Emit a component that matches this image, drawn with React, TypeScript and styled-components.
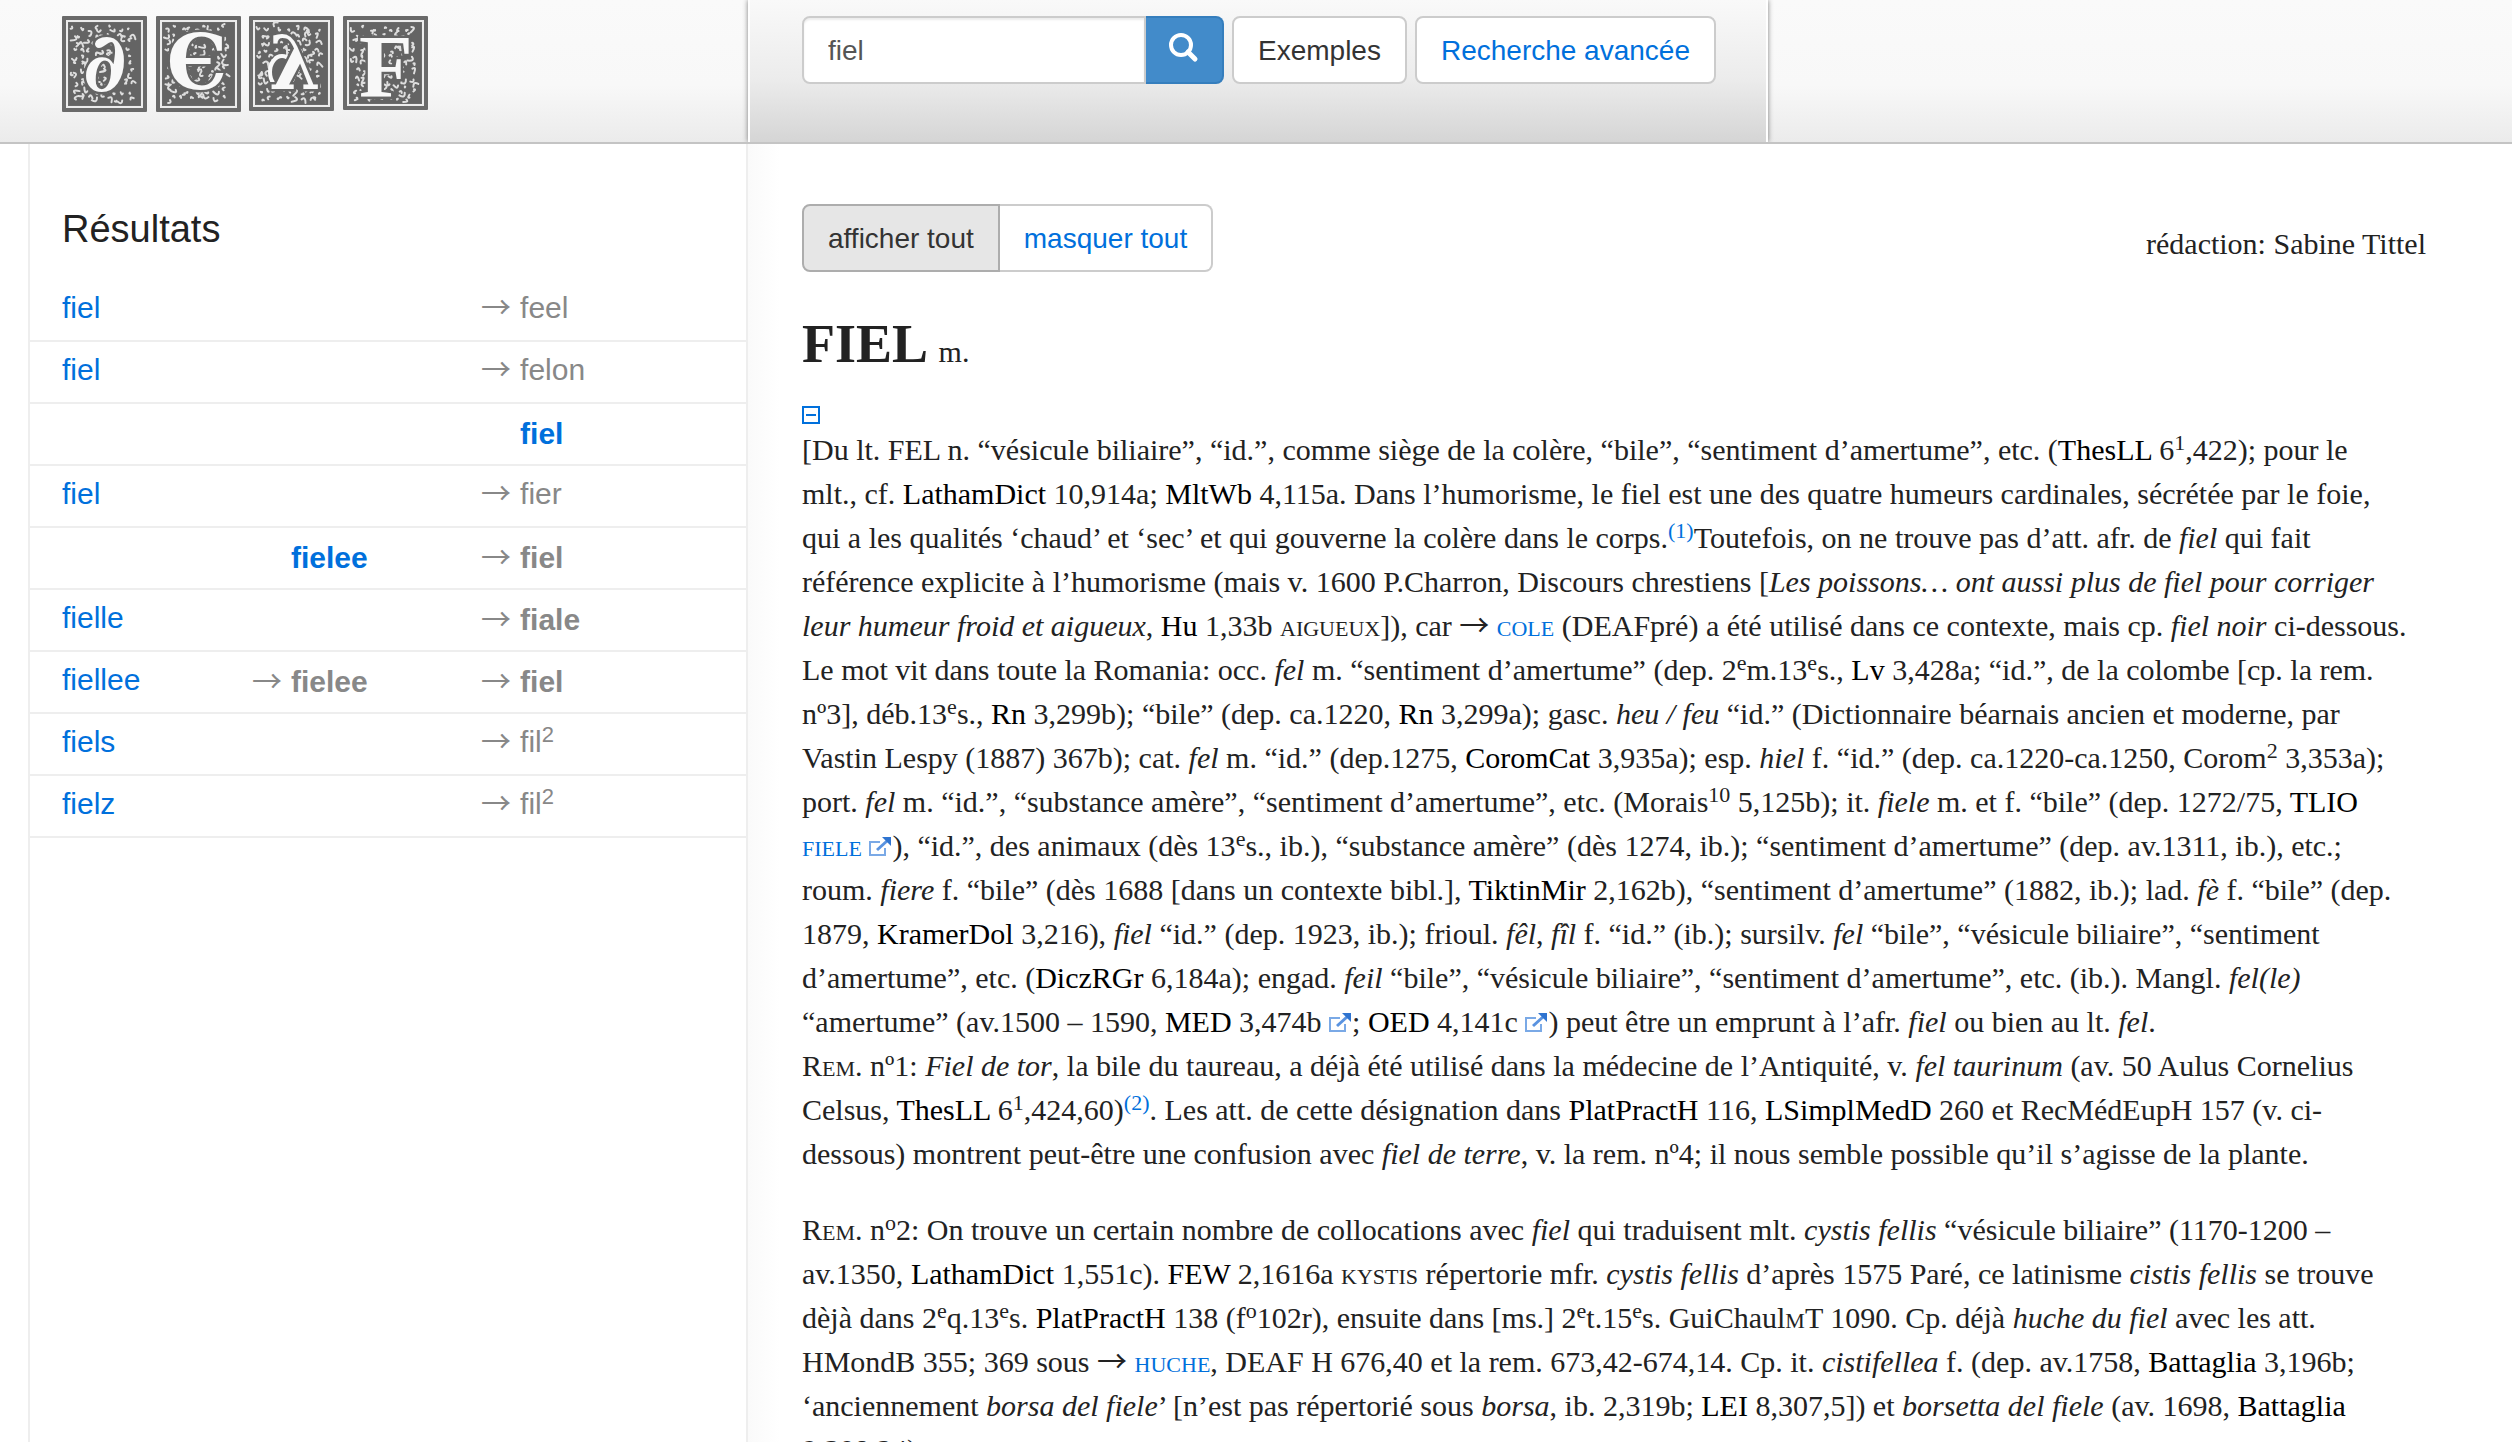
import React from "react";
import styled, { createGlobalStyle } from "styled-components";

const sans = `"Liberation Sans", Arial, sans-serif`;
const serif = `"Liberation Serif", "Times New Roman", serif`;
const arrowFont = `"Noto Sans CJK JP", sans-serif`;
const blue = "#0070dc";

const Global = createGlobalStyle`
  * { box-sizing: border-box; }
  html, body, #root { height: 100%; }
  body { margin: 0; background: #fff; color: #222; font-family: ${sans}; overflow: hidden; }
  a { color: ${blue}; text-decoration: none; }
`;

const Page = styled.div`
  display: flex;
  flex-direction: column;
  height: 100%;
`;

const Header = styled.header`
  display: grid;
  grid-template-columns: 748px auto 1fr;
  flex: none;
  height: 144px;
  border-bottom: 2px solid #c4c4c4;
  background: linear-gradient(#fafafa, #f8f8f8 60%, #ebebeb);
`;

const Brand = styled.a`
  display: block;
  padding: 15px 0 0 60px;
  line-height: 0;
`;

const SearchPanel = styled.form`
  display: flex;
  align-items: flex-start;
  gap: 8px;
  padding: 16px 50px 16px 52px;
  border: solid #fff;
  border-width: 0 2px;
  background: linear-gradient(#f9f9f9, #ececec 55%, #d5d5d5);
  box-shadow: 0 0 5px rgba(0, 0, 0, 0.5);
  clip-path: inset(0 -6px 0 -6px);
`;

const Field = styled.div`
  display: flex;
`;

const SearchInput = styled.input`
  width: 344px;
  height: 68px;
  padding: 2px 24px 0;
  border: 2px solid #ccc;
  border-radius: 8px 0 0 8px;
  background: #fff;
  box-shadow: inset 0 2px 2px rgba(0, 0, 0, 0.075);
  color: #555;
  font: 28px ${sans};
  outline: none;
`;

const SearchButton = styled.button`
  display: flex;
  align-items: center;
  justify-content: center;
  width: 78px;
  height: 68px;
  padding: 0 0 4px;
  border: 2px solid #357ebd;
  border-left: 0;
  border-radius: 0 8px 8px 0;
  background: #428bca;
`;

const Button = styled.button<{ $link?: boolean; $active?: boolean }>`
  height: 68px;
  padding: 2px 24px 0;
  border: 2px solid ${(p) => (p.$active ? "#adadad" : "#ccc")};
  border-radius: 8px;
  background: ${(p) => (p.$active ? "#e6e6e6" : "#fff")};
  color: ${(p) => (p.$link ? blue : "#333")};
  font: 28px ${sans};
  white-space: nowrap;
`;

const ButtonGroup = styled.div`
  display: flex;
  ${Button}:first-child { border-radius: 8px 0 0 8px; }
  ${Button}:last-child { border-radius: 0 8px 8px 0; border-left: 0; }
`;

const Main = styled.div`
  display: grid;
  grid-template-columns: 720px 1fr;
  flex: 1;
  min-height: 0;
  padding-left: 28px;
`;

const Sidebar = styled.aside`
  padding-top: 63px;
  border: solid #eee;
  border-width: 0 2px;
`;

const SidebarTitle = styled.h2`
  margin: 0;
  padding-left: 32px;
  color: #222;
  font: 38px/44px ${sans};
`;

const Results = styled.table`
  width: 100%;
  margin-top: 28px;
  border-collapse: collapse;
  table-layout: fixed;
  font: 30px/34px ${sans};
`;

const Col = styled.col<{ $share: number }>`
  width: ${(p) => p.$share}%;
`;

const Row = styled.tr`
  height: 62px;
  border-bottom: 2px solid #eee;
`;

const Cell = styled.td<{ $first?: boolean }>`
  padding: ${(p) => (p.$first ? "0 0 4px 32px" : "0 0 4px")};
  color: #888;
  vertical-align: middle;
  white-space: nowrap;
  sup { font-size: 22px; line-height: 0; vertical-align: 10px; }
`;

const Target = styled.span<{ $bold?: boolean }>`
  display: flex;
  align-items: baseline;
  padding-top: ${(p) => (p.$bold ? "4px" : "0")};
  font-weight: ${(p) => (p.$bold ? 700 : 400)};
`;

const ArrowSlot = styled.span`
  flex: none;
  width: 39px;
  font: 400 30px/28px ${arrowFont};
`;

const Article = styled.main`
  padding: 60px 86px 0 54px;
  background: linear-gradient(to right, #fafafa, #fff 32px);
  font-family: ${serif};
  overflow: hidden;
`;

const Toolbar = styled.div`
  display: flex;
  align-items: center;
  justify-content: space-between;
`;

const Credit = styled.span`
  padding-top: 12px;
  font-size: 30px;
  line-height: 44px;
`;

const Headword = styled.h1`
  margin: 40px 0 0;
  font-size: 54px;
  line-height: 64px;
  small { font-size: 30px; font-weight: 400; }
`;

const Toggle = styled.button`
  display: block;
  margin: 22px 0 4px;
  padding: 0;
  border: 0;
  background: none;
  line-height: 0;
`;

const Para = styled.p`
  margin: 0 0 32px;
  font-size: 30px;
  line-height: 44px;
  white-space: nowrap;
  sup { font-size: 22px; line-height: 0; vertical-align: 10px; }
`;

const Src = styled.a`
  && { color: #000; }
`;

const Caps = styled.span`
  font-size: 22px;
  line-height: 0;
`;

const CapsLink = styled.a`
  font-size: 22px;
  line-height: 0;
`;

const Arr = styled.span`
  font-family: ${arrowFont};
  font-size: 30px;
  line-height: 0;
`;

const ExtLink = styled.a`
  display: inline-block;
  width: 23px;
  height: 19px;
  line-height: 0;
`;

const Ext = () => (
  <ExtLink href="#" aria-label="lien externe">
    <svg width="23" height="19" viewBox="0 0 23 19" fill="none">
      <path d="M11 5H1v13h15v-7" stroke="#7aa9e6" strokeWidth="2" />
      <path d="M8 13 18 4" stroke="#5a93e0" strokeWidth="3" />
      <path d="M13 0h9v9z" fill="#2f74d0" />
    </svg>
  </ExtLink>
);

/* Woodcut initials: a framed tile filled with small foliage strokes. */
function foliage(seed: number) {
  let s = seed;
  const rnd = () => (s = (s * 16807) % 2147483647) / 2147483647;
  const out: string[] = [];
  for (let y = 10; y < 84; y += 7) {
    for (let x = 10; x < 73; x += 7) {
      const px = x + rnd() * 5;
      const py = y + rnd() * 5;
      const a = rnd() * 6.28;
      const r = 1 + rnd() * 5;
      const b = a + 1 + rnd();
      out.push(
        `M${px.toFixed(1)} ${py.toFixed(1)}q${(Math.cos(a) * r).toFixed(1)} ${(Math.sin(a) * r).toFixed(1)} ${(Math.cos(b) * r).toFixed(1)} ${(Math.sin(b) * r).toFixed(1)}`
      );
    }
  }
  return out.join("");
}

type TileProps = { x: number; h: number; seed: number; children: React.ReactNode };
const Tile = ({ x, h, seed, children }: TileProps) => (
  <g transform={`translate(${x} 1)`}>
    <rect width="85" height={h} rx="1" fill="#6a6a6a" />
    <rect x="5" y="5" width="75" height={h - 10} fill="none" stroke="#ececec" strokeWidth="2" />
    <rect x="7" y="7" width="71" height={h - 14} fill="#646464" />
    <path d={foliage(seed)} fill="none" stroke="#dedede" strokeWidth="2" strokeLinecap="round" />
    {children}
  </g>
);

const Glyph = styled.text<{ $serif?: boolean }>`
  fill: #f8f8f8;
  stroke: #646464;
  stroke-width: 5px;
  paint-order: stroke;
  font-family: ${(p) => (p.$serif ? `"Liberation Serif", serif` : `"DejaVu Serif", serif`)};
  font-weight: 700;
  text-anchor: middle;
`;

const Logo = () => (
  <svg width="370" height="100" viewBox="0 0 370 100" role="img" aria-label="DEAF">
    <Tile x={2} h={96} seed={77}>
      <Glyph x="43" y="75" fontSize="82">∂</Glyph>
    </Tile>
    <Tile x={96} h={96} seed={4231}>
      <Glyph x="41" y="73" fontSize="76">Є</Glyph>
    </Tile>
    <Tile x={189} h={95} seed={9917}>
      <ellipse cx="33" cy="56" rx="12" ry="16" fill="#646464" stroke="#f8f8f8" strokeWidth="4" />
      <Glyph x="46" y="73" fontSize="74">λ</Glyph>
    </Tile>
    <Tile x={283} h={94} seed={31337}>
      <Glyph $serif x="43" y="80" fontSize="88">F</Glyph>
    </Tile>
  </svg>
);

const SearchIcon = () => (
  <svg width="30" height="30" viewBox="0 0 30 30" fill="none" stroke="#fff">
    <circle cx="12" cy="12" r="10" strokeWidth="4" />
    <path d="M19 19l7 7" strokeWidth="5" strokeLinecap="round" />
  </svg>
);

type Ref = { word: React.ReactNode; arrow?: boolean; bold?: boolean; link?: boolean };
type Result = { form?: string; mid?: Ref; end: Ref };

const fil2 = <>fil<sup>2</sup></>;
const results: Result[] = [
  { form: "fiel", end: { word: "feel", arrow: true } },
  { form: "fiel", end: { word: "felon", arrow: true } },
  { end: { word: "fiel", bold: true, link: true } },
  { form: "fiel", end: { word: "fier", arrow: true } },
  { mid: { word: "fielee", bold: true, link: true }, end: { word: "fiel", arrow: true, bold: true } },
  { form: "fielle", end: { word: "fiale", arrow: true, bold: true } },
  { form: "fiellee", mid: { word: "fielee", arrow: true, bold: true }, end: { word: "fiel", arrow: true, bold: true } },
  { form: "fiels", end: { word: fil2, arrow: true } },
  { form: "fielz", end: { word: fil2, arrow: true } },
];

const RefCell = ({ item }: { item?: Ref }) => (
  <Cell>
    {item && (
      <Target $bold={item.bold}>
        <ArrowSlot>{item.arrow ? "→" : "\u00a0"}</ArrowSlot>
        {item.link ? <a href="#">{item.word}</a> : <span>{item.word}</span>}
      </Target>
    )}
  </Cell>
);

export default function App() {
  return (
    <Page>
      <Global />
      <Header>
        <Brand href="#"><Logo /></Brand>
        <SearchPanel onSubmit={(e) => e.preventDefault()}>
          <Field>
            <SearchInput aria-label="Recherche" defaultValue="fiel" />
            <SearchButton aria-label="Chercher"><SearchIcon /></SearchButton>
          </Field>
          <Button type="button">Exemples</Button>
          <Button type="button" $link>Recherche avancée</Button>
        </SearchPanel>
      </Header>
      <Main>
        <Sidebar>
          <SidebarTitle>Résultats</SidebarTitle>
          <Results>
            <colgroup>
              <Col $share={31} />
              <Col $share={32} />
              <Col $share={37} />
            </colgroup>
            <tbody>
              {results.map((r, i) => (
                <Row key={i}>
                  <Cell $first>{r.form && <a href="#">{r.form}</a>}</Cell>
                  <RefCell item={r.mid} />
                  <RefCell item={r.end} />
                </Row>
              ))}
            </tbody>
          </Results>
        </Sidebar>
        <Article>
          <Toolbar>
            <ButtonGroup>
              <Button $active>afficher tout</Button>
              <Button $link>masquer tout</Button>
            </ButtonGroup>
            <Credit>rédaction: Sabine Tittel</Credit>
          </Toolbar>
          <Headword>FIEL <small>m.</small></Headword>
          <Toggle aria-label="masquer">
            <svg width="18" height="18" viewBox="0 0 18 18" fill="none" stroke={blue} strokeWidth="2">
              <rect x="1" y="1" width="16" height="16" />
              <path d="M4 9h10" />
            </svg>
          </Toggle>
          <Para>
            [Du lt. FEL n. “vésicule biliaire”, “id.”, comme siège de la colère, “bile”, “sentiment d’amertume”, etc. (<Src href="#">ThesLL</Src> 6<sup>1</sup>,422); pour le<br />
            mlt., cf. <Src href="#">LathamDict</Src> 10,914a; <Src href="#">MltWb</Src> 4,115a. Dans l’humorisme, le fiel est une des quatre humeurs cardinales, sécrétée par le foie,<br />
            qui a les qualités ‘chaud’ et ‘sec’ et qui gouverne la colère dans le corps.<sup><a href="#">(1)</a></sup>Toutefois, on ne trouve pas d’att. afr. de <i>fiel</i> qui fait<br />
            référence explicite à l’humorisme (mais v. 1600 P.Charron, Discours chrestiens [<i>Les poissons… ont aussi plus de fiel pour corriger</i><br />
            <i>leur humeur froid et aigueux</i>, <Src href="#">Hu</Src> 1,33b <Caps>AIGUEUX</Caps>]), car <Arr>→</Arr> <CapsLink href="#">COLE</CapsLink> (DEAFpré) a été utilisé dans ce contexte, mais cp. <i>fiel noir</i> ci-dessous.<br />
            Le mot vit dans toute la Romania: occ. <i>fel</i> m. “sentiment d’amertume” (dep. 2<sup>e</sup>m.13<sup>e</sup>s., <Src href="#">Lv</Src> 3,428a; “id.”, de la colombe [cp. la rem.<br />
            nº3], déb.13<sup>e</sup>s., <Src href="#">Rn</Src> 3,299b); “bile” (dep. ca.1220, <Src href="#">Rn</Src> 3,299a); gasc. <i>heu / feu</i> “id.” (Dictionnaire béarnais ancien et moderne, par<br />
            Vastin Lespy (1887) 367b); cat. <i>fel</i> m. “id.” (dep.1275, <Src href="#">CoromCat</Src> 3,935a); esp. <i>hiel</i> f. “id.” (dep. ca.1220-ca.1250, Corom<sup>2</sup> 3,353a);<br />
            port. <i>fel</i> m. “id.”, “substance amère”, “sentiment d’amertume”, etc. (Morais<sup>10</sup> 5,125b); it. <i>fiele</i> m. et f. “bile” (dep. 1272/75, <Src href="#">TLIO</Src><br />
            <CapsLink href="#">FIELE</CapsLink> <Ext />), “id.”, des animaux (dès 13<sup>e</sup>s., ib.), “substance amère” (dès 1274, ib.); “sentiment d’amertume” (dep. av.1311, ib.), etc.;<br />
            roum. <i>fiere</i> f. “bile” (dès 1688 [dans un contexte bibl.], <Src href="#">TiktinMir</Src> 2,162b), “sentiment d’amertume” (1882, ib.); lad. <i>fè</i> f. “bile” (dep.<br />
            1879, <Src href="#">KramerDol</Src> 3,216), <i>fiel</i> “id.” (dep. 1923, ib.); frioul. <i>fêl</i>, <i>fîl</i> f. “id.” (ib.); sursilv. <i>fel</i> “bile”, “vésicule biliaire”, “sentiment<br />
            d’amertume”, etc. (<Src href="#">DiczRGr</Src> 6,184a); engad. <i>feil</i> “bile”, “vésicule biliaire”, “sentiment d’amertume”, etc. (ib.). Mangl. <i>fel(le)</i><br />
            “amertume” (av.1500 – 1590, <Src href="#">MED</Src> 3,474b <Ext />; <Src href="#">OED</Src> 4,141c <Ext />) peut être un emprunt à l’afr. <i>fiel</i> ou bien au lt. <i>fel</i>.<br />
            R<Caps>EM</Caps>. nº1: <i>Fiel de tor</i>, la bile du taureau, a déjà été utilisé dans la médecine de l’Antiquité, v. <i>fel taurinum</i> (av. 50 Aulus Cornelius<br />
            Celsus, <Src href="#">ThesLL</Src> 6<sup>1</sup>,424,60)<sup><a href="#">(2)</a></sup>. Les att. de cette désignation dans <Src href="#">PlatPractH</Src> 116, <Src href="#">LSimplMedD</Src> 260 et RecMédEupH 157 (v. ci-<br />
            dessous) montrent peut-être une confusion avec <i>fiel de terre</i>, v. la rem. nº4; il nous semble possible qu’il s’agisse de la plante.
          </Para>
          <Para>
            R<Caps>EM</Caps>. n<sup>o</sup>2: On trouve un certain nombre de collocations avec <i>fiel</i> qui traduisent mlt. <i>cystis fellis</i> “vésicule biliaire” (1170-1200 –<br />
            av.1350, <Src href="#">LathamDict</Src> 1,551c). <Src href="#">FEW</Src> 2,1616a <Caps>KYSTIS</Caps> répertorie mfr. <i>cystis fellis</i> d’après 1575 Paré, ce latinisme <i>cistis fellis</i> se trouve<br />
            dèjà dans 2<sup>e</sup>q.13<sup>e</sup>s. <Src href="#">PlatPractH</Src> 138 (f<sup>o</sup>102r), ensuite dans [ms.] 2<sup>e</sup>t.15<sup>e</sup>s. GuiChaul<Caps>M</Caps>T 1090. Cp. déjà <i>huche du fiel</i> avec les att.<br />
            HMondB 355; 369 sous <Arr>→</Arr> <CapsLink href="#">HUCHE</CapsLink>, DEAF H 676,40 et la rem. 673,42-674,14. Cp. it. <i>cistifellea</i> f. (dep. av.1758, <Src href="#">Battaglia</Src> 3,196b;<br />
            ‘anciennement <i>borsa del fiele</i>’ [n’est pas répertorié sous <i>borsa</i>, ib. 2,319b; <Src href="#">LEI</Src> 8,307,5]) et <i>borsetta del fiele</i> (av. 1698, <Src href="#">Battaglia</Src><br />
            9,308,24).
          </Para>
        </Article>
      </Main>
    </Page>
  );
}
